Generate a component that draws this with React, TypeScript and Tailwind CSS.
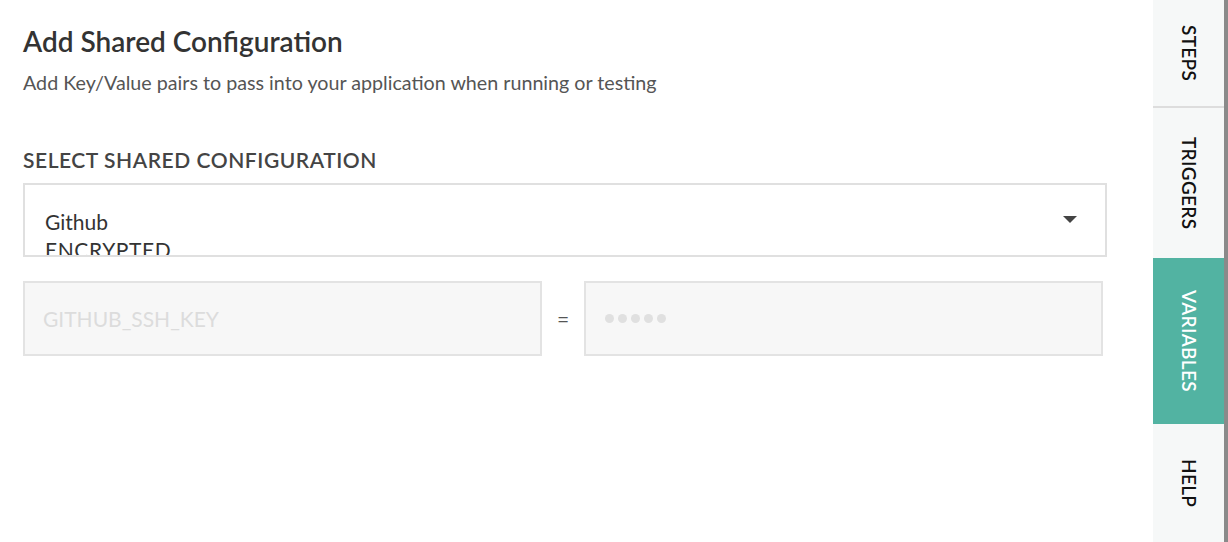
import { useState } from "react";

const tabs = [
    { label: "STEPS", h: "h-[108px]" },
    { label: "TRIGGERS", h: "h-[150px]" },
    { label: "VARIABLES", h: "h-[166px]" },
    { label: "HELP", h: "flex-1" },
];

export default function App() {
    const [active, setActive] = useState("VARIABLES");

    return (
        <div className="flex h-[542px] w-[1228px] bg-white font-['Lato','Liberation_Sans',sans-serif] text-[#333] overflow-hidden">
            {/* Main panel */}
            <div className="flex-1 pl-[23px] pr-[46px]">
                <h1 className="mt-[22px] text-[28px] font-semibold leading-[38px] text-[#333]">Add Shared Configuration</h1>
                <p className="mt-[10px] text-[19.7px] leading-[26px] text-[#555]">
                    Add Key/Value pairs to pass into your application when running or testing
                </p>

                <h2 className="mt-[51px] text-[21px] font-semibold leading-[26px] tracking-[0.55px] text-[#444]">SELECT SHARED CONFIGURATION</h2>

                {/* Select */}
                <div className="relative mt-[10px] h-[74px] border-2 border-[#e0e0e0] overflow-hidden">
                    <div className="pl-[20px] pt-[23px] text-[21px] leading-[28px] text-[#333]">
                        <div>Github</div>
                        <div className="tracking-[0.6px]">ENCRYPTED</div>
                    </div>
                    <svg className="absolute right-[28px] top-[31px]" width="14" height="8" viewBox="0 0 14 8">
                        <path d="M0 0 H14 L7 7 Z" fill="#444" />
                    </svg>
                </div>

                {/* Key = Value */}
                <div className="mt-[24px] flex items-center">
                    <div className="flex h-[75px] w-[519px] items-center border-2 border-[#e3e3e3] bg-[#f7f7f7] pl-[18px] text-[21px] text-[#dcdcdc]">
                        GITHUB_SSH_KEY
                    </div>
                    <div className="w-[42px] text-center text-[21px] text-[#555]">=</div>
                    <div className="flex h-[75px] w-[519px] items-center gap-[4px] border-2 border-[#e3e3e3] bg-[#f7f7f7] pl-[19px]">
                        {[0, 1, 2, 3, 4].map((i) => (
                            <span key={i} className="h-[9px] w-[9px] rounded-full bg-[#e0e0e0]" />
                        ))}
                    </div>
                </div>
            </div>

            {/* Side tabs */}
            <div className="flex w-[71px] flex-col bg-[#f6f8f8]">
                {tabs.map((t, i) => (
                    <button
                        key={t.label}
                        onClick={() => setActive(t.label)}
                        className={`${t.h} flex items-center justify-center ${i === 0 ? "border-b-2 border-[#dddddd]" : ""} ${
                            active === t.label ? "bg-[#52b3a2] text-white" : "text-[#111]"
                        }`}
                    >
                        <span className="[writing-mode:vertical-rl] text-[19px] font-semibold tracking-[0.3px]">{t.label}</span>
                    </button>
                ))}
            </div>
            <div className="w-[4px] bg-[#8a8a8a]" />
        </div>
    );
}
